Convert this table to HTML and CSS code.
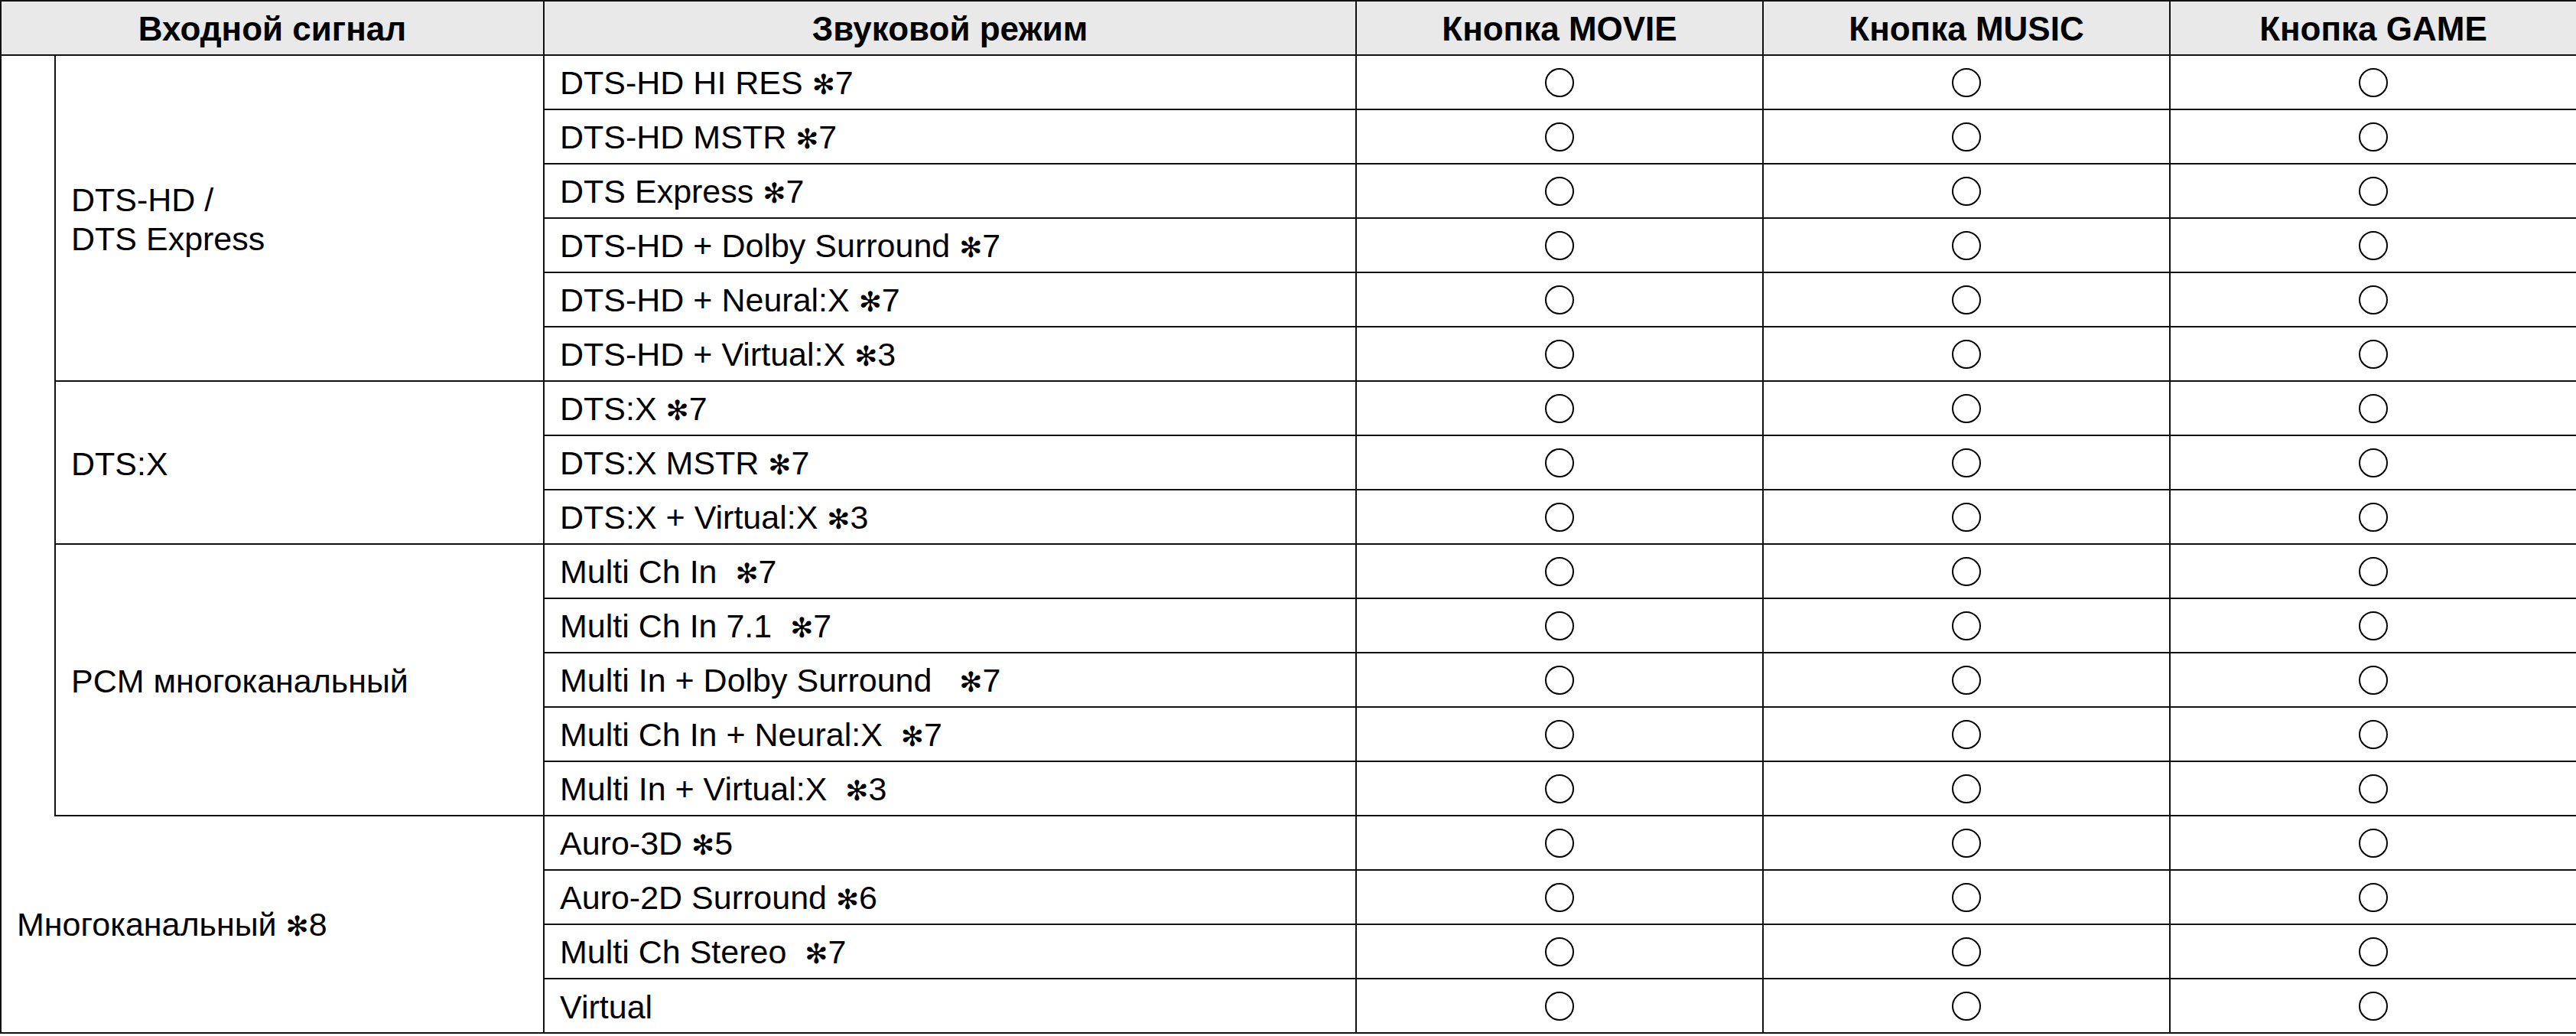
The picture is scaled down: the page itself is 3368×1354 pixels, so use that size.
FILE: index.html
```html
<!DOCTYPE html>
<html>
<head>
    <title>Звуковые режимы</title>
    <link rel="stylesheet" href="styles.css">
</head>
<body>
    <table class="modes">
        <colgroup>
            <col class="c-strip">
            <col class="c-group">
            <col class="c-mode">
            <col class="c-btn">
            <col class="c-btn">
            <col class="c-btn">
        </colgroup>
        <thead>
            <tr>
                <th colspan="2">Входной сигнал</th>
                <th>Звуковой режим</th>
                <th>Кнопка MOVIE</th>
                <th>Кнопка MUSIC</th>
                <th>Кнопка GAME</th>
            </tr>
        </thead>
        <tbody>
            <tr>
                <td class="strip" rowspan="14"></td>
                <td class="group" rowspan="6">DTS-HD /<br>DTS Express</td>
                <td class="mode">DTS-HD HI RES <span class="note">✻</span>7</td>
                <td class="mark"><span class="circle"></span></td>
                <td class="mark"><span class="circle"></span></td>
                <td class="mark"><span class="circle"></span></td>
            </tr>
            <tr>
                <td class="mode">DTS-HD MSTR <span class="note">✻</span>7</td>
                <td class="mark"><span class="circle"></span></td>
                <td class="mark"><span class="circle"></span></td>
                <td class="mark"><span class="circle"></span></td>
            </tr>
            <tr>
                <td class="mode">DTS Express <span class="note">✻</span>7</td>
                <td class="mark"><span class="circle"></span></td>
                <td class="mark"><span class="circle"></span></td>
                <td class="mark"><span class="circle"></span></td>
            </tr>
            <tr>
                <td class="mode">DTS-HD + Dolby Surround <span class="note">✻</span>7</td>
                <td class="mark"><span class="circle"></span></td>
                <td class="mark"><span class="circle"></span></td>
                <td class="mark"><span class="circle"></span></td>
            </tr>
            <tr>
                <td class="mode">DTS-HD + Neural:X <span class="note">✻</span>7</td>
                <td class="mark"><span class="circle"></span></td>
                <td class="mark"><span class="circle"></span></td>
                <td class="mark"><span class="circle"></span></td>
            </tr>
            <tr>
                <td class="mode">DTS-HD + Virtual:X <span class="note">✻</span>3</td>
                <td class="mark"><span class="circle"></span></td>
                <td class="mark"><span class="circle"></span></td>
                <td class="mark"><span class="circle"></span></td>
            </tr>
            <tr>
                <td class="group" rowspan="3">DTS:X</td>
                <td class="mode">DTS:X <span class="note">✻</span>7</td>
                <td class="mark"><span class="circle"></span></td>
                <td class="mark"><span class="circle"></span></td>
                <td class="mark"><span class="circle"></span></td>
            </tr>
            <tr>
                <td class="mode">DTS:X MSTR <span class="note">✻</span>7</td>
                <td class="mark"><span class="circle"></span></td>
                <td class="mark"><span class="circle"></span></td>
                <td class="mark"><span class="circle"></span></td>
            </tr>
            <tr>
                <td class="mode">DTS:X + Virtual:X <span class="note">✻</span>3</td>
                <td class="mark"><span class="circle"></span></td>
                <td class="mark"><span class="circle"></span></td>
                <td class="mark"><span class="circle"></span></td>
            </tr>
            <tr>
                <td class="group" rowspan="5">PCM многоканальный</td>
                <td class="mode">Multi Ch In  <span class="note">✻</span>7</td>
                <td class="mark"><span class="circle"></span></td>
                <td class="mark"><span class="circle"></span></td>
                <td class="mark"><span class="circle"></span></td>
            </tr>
            <tr>
                <td class="mode">Multi Ch In 7.1  <span class="note">✻</span>7</td>
                <td class="mark"><span class="circle"></span></td>
                <td class="mark"><span class="circle"></span></td>
                <td class="mark"><span class="circle"></span></td>
            </tr>
            <tr>
                <td class="mode">Multi In + Dolby Surround   <span class="note">✻</span>7</td>
                <td class="mark"><span class="circle"></span></td>
                <td class="mark"><span class="circle"></span></td>
                <td class="mark"><span class="circle"></span></td>
            </tr>
            <tr>
                <td class="mode">Multi Ch In + Neural:X  <span class="note">✻</span>7</td>
                <td class="mark"><span class="circle"></span></td>
                <td class="mark"><span class="circle"></span></td>
                <td class="mark"><span class="circle"></span></td>
            </tr>
            <tr>
                <td class="mode">Multi In + Virtual:X  <span class="note">✻</span>3</td>
                <td class="mark"><span class="circle"></span></td>
                <td class="mark"><span class="circle"></span></td>
                <td class="mark"><span class="circle"></span></td>
            </tr>
            <tr>
                <td class="group wide" colspan="2" rowspan="4">Многоканальный <span class="note">✻</span>8</td>
                <td class="mode">Auro-3D <span class="note">✻</span>5</td>
                <td class="mark"><span class="circle"></span></td>
                <td class="mark"><span class="circle"></span></td>
                <td class="mark"><span class="circle"></span></td>
            </tr>
            <tr>
                <td class="mode">Auro-2D Surround <span class="note">✻</span>6</td>
                <td class="mark"><span class="circle"></span></td>
                <td class="mark"><span class="circle"></span></td>
                <td class="mark"><span class="circle"></span></td>
            </tr>
            <tr>
                <td class="mode">Multi Ch Stereo  <span class="note">✻</span>7</td>
                <td class="mark"><span class="circle"></span></td>
                <td class="mark"><span class="circle"></span></td>
                <td class="mark"><span class="circle"></span></td>
            </tr>
            <tr>
                <td class="mode">Virtual</td>
                <td class="mark"><span class="circle"></span></td>
                <td class="mark"><span class="circle"></span></td>
                <td class="mark"><span class="circle"></span></td>
            </tr>
        </tbody>
    </table>
</body>
</html>
```

FILE: styles.css
```css
body {
    margin: 0;
    background: #fff;
    color: #000;
    font-family: "Liberation Sans", Arial, sans-serif;
}
.modes {
    width: 3368px;
    border-collapse: collapse;
    table-layout: fixed;
}
.c-strip { width: 71px; }
.c-group { width: 639px; }
.c-mode { width: 1062px; }
.c-btn { width: 532px; }
.modes tr {
    height: 71px;
}
.modes th,
.modes td {
    border: 2px solid #111;
    padding: 0;
}
.modes th {
    background: #e9e9e9;
    font-size: 44px;
    font-weight: bold;
    text-align: center;
    padding-top: 2px;
}
.modes td {
    font-size: 43px;
    line-height: 51px;
    vertical-align: middle;
}
.modes .strip {
    border-bottom-style: hidden;
}
.modes .group {
    padding: 3px 0 0 20px;
}
.modes .mode {
    padding: 3px 0 0 20px;
    white-space: pre;
}
.mark {
    text-align: center;
}
.circle {
    display: block;
    width: 34px;
    height: 34px;
    margin: 0 auto;
    border: 2px solid #000;
    border-radius: 50%;
}
.note {
    font-family: "DejaVu Sans", sans-serif;
    font-size: 36px;
}
```
